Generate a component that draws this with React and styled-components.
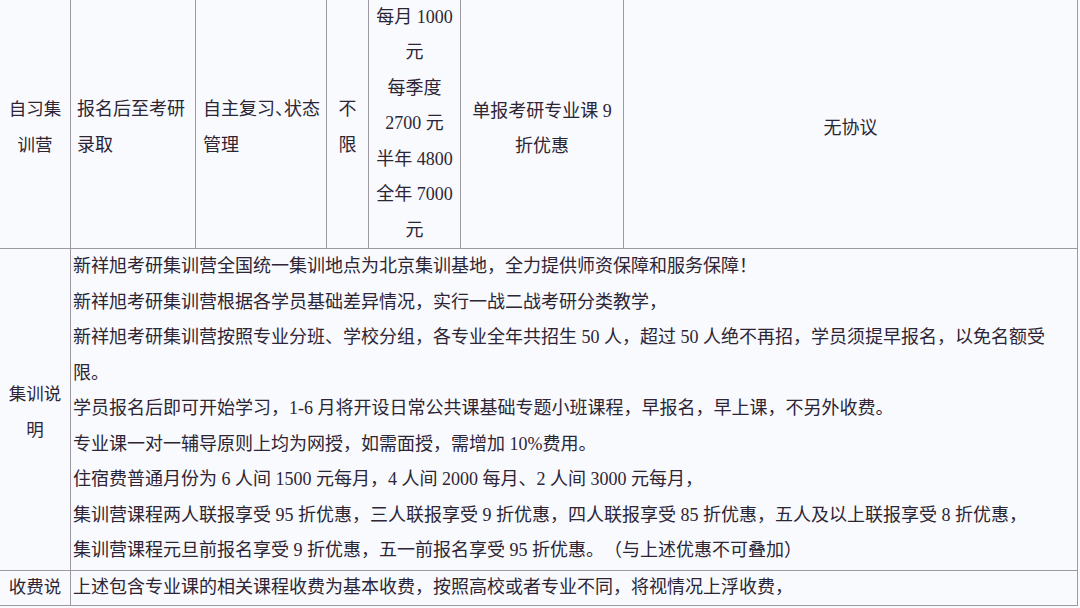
import React from 'react';
import styled, { createGlobalStyle } from 'styled-components';

const GlobalStyle = createGlobalStyle`
  html, body {
    margin: 0;
    padding: 0;
    background: #f8fafd;
  }
  body {
    font-family: "Liberation Serif", "Noto Sans CJK SC", serif;
    color: #2d2535;
    text-spacing-trim: space-all;
  }
`;

// the grid gap shows the background through, which draws the table lines
const Sheet = styled.div`
  display: grid;
  grid-template-columns: 70px 124px 130px 41px 91px 162px 453px;
  grid-template-rows: 248px 321px 34px;
  gap: 1px;
  width: 1077px;
  padding: 0 1px 1px 0;
  background: #9d98a3;
  overflow: hidden;
`;

const Cell = styled.div`
  background: #f8fafd;
  font-size: 18px;
  line-height: 35.5px;
  display: flex;
  flex-direction: column;
  justify-content: ${(p) => (p.top ? 'flex-start' : 'center')};
  text-align: ${(p) => (p.left ? 'left' : 'center')};
  padding: ${(p) => p.pad || '7px 6px 0'};
  grid-column: ${(p) => p.span || 'auto'};
  font-feature-settings: ${(p) => (p.tight ? '"halt"' : 'normal')};
  overflow: hidden;
  min-width: 0;
`;

const Label = styled(Cell)`
  padding: ${(p) => p.pad || '0 8px'};
  font-size: 17.5px;
`;

const Line = styled.div`
  white-space: normal;
`;

const notes = [
  '新祥旭考研集训营全国统一集训地点为北京集训基地，全力提供师资保障和服务保障！',
  '新祥旭考研集训营根据各学员基础差异情况，实行一战二战考研分类教学，',
  '新祥旭考研集训营按照专业分班、学校分组，各专业全年共招生 50 人，超过 50 人绝不再招，学员须提早报名，以免名额受限。',
  '学员报名后即可开始学习，1-6 月将开设日常公共课基础专题小班课程，早报名，早上课，不另外收费。',
  '专业课一对一辅导原则上均为网授，如需面授，需增加 10%费用。',
  '住宿费普通月份为 6 人间 1500 元每月，4 人间 2000 每月、2 人间 3000 元每月，',
  '集训营课程两人联报享受 95 折优惠，三人联报享受 9 折优惠，四人联报享受 85 折优惠，五人及以上联报享受 8 折优惠，',
  '集训营课程元旦前报名享受 9 折优惠，五一前报名享受 95 折优惠。（与上述优惠不可叠加）',
];

const prices = ['每月 1000 元', '每季度 2700 元', '半年 4800', '全年 7000 元'];

export default function App() {
  return (
    <>
      <GlobalStyle />
      <Sheet>
        <Label pad="7px 8px 0">自习集训营</Label>
        <Cell left>报名后至考研录取</Cell>
        <Cell left tight pad="7px 0 0 7px">自主复习、状态管理</Cell>
        <Cell pad="7px 11px 0">不限</Cell>
        <Cell pad="0 5px">
          {prices.map((p) => (
            <Line key={p}>{p}</Line>
          ))}
        </Cell>
        <Cell pad="10px 4px 0">单报考研专业课 9 折优惠</Cell>
        <Cell pad="9px 6px 0">无协议</Cell>

        <Label pad="6px 8px 0">集训说明</Label>
        <Cell left top span="2 / 8" pad="0 16px 0 2px">
          {notes.map((n) => (
            <Line key={n}>{n}</Line>
          ))}
        </Cell>

        <Label>收费说</Label>
        <Cell left span="2 / 8" pad="0 16px 0 2px">
          上述包含专业课的相关课程收费为基本收费，按照高校或者专业不同，将视情况上浮收费，
        </Cell>
      </Sheet>
    </>
  );
}
